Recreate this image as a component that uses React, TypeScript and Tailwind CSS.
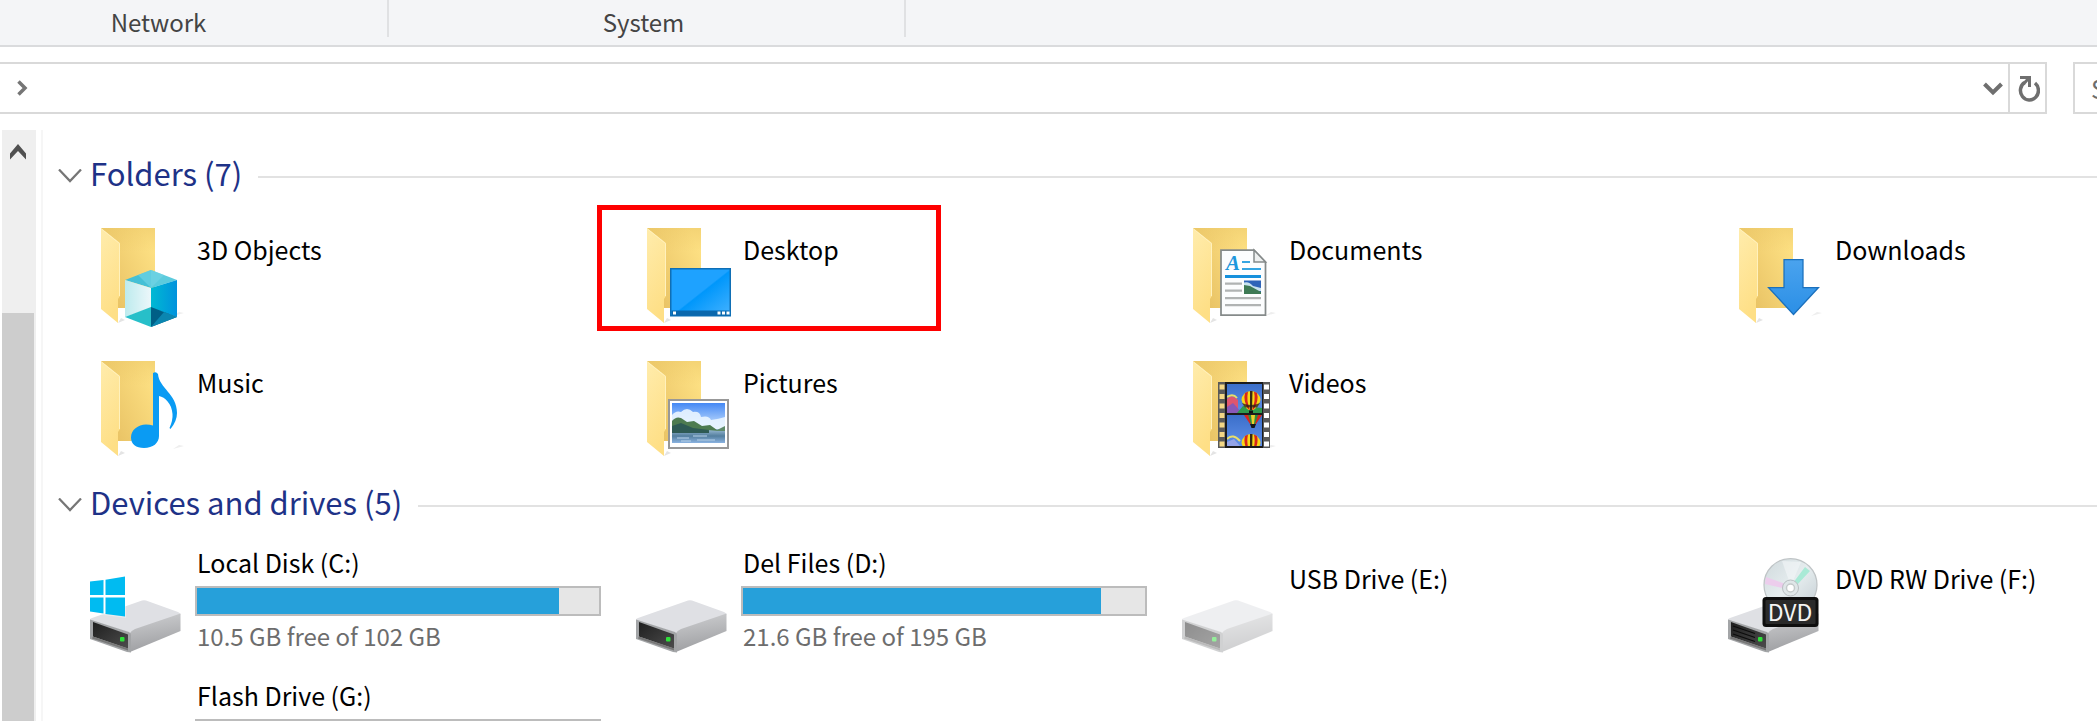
import type { ReactNode } from "react";

function Gradients() {
  return (
    <svg aria-hidden="true" className="absolute h-0 w-0">
      <defs>
        <linearGradient id="folder-back" x1="0" y1="1" x2="1" y2="0.3">
          <stop offset="0.2" stopColor="#e9c365" />
          <stop offset="1" stopColor="#fde083" />
        </linearGradient>
        <linearGradient id="folder-top" x1="0" y1="0" x2="0" y2="1">
          <stop offset="0" stopColor="#e6c05f" stopOpacity="0.4" />
          <stop offset="0.3" stopColor="#e6c05f" stopOpacity="0" />
        </linearGradient>
        <linearGradient id="folder-flap" x1="0" y1="0" x2="0.3" y2="1">
          <stop offset="0" stopColor="#ffecac" />
          <stop offset="1" stopColor="#fedf86" />
        </linearGradient>
        <linearGradient id="cube-right" x1="0" y1="0" x2="1" y2="0">
          <stop offset="0" stopColor="#00b9d3" />
          <stop offset="1" stopColor="#0092dd" />
        </linearGradient>
        <linearGradient id="cube-left" x1="0" y1="0" x2="1" y2="0">
          <stop offset="0" stopColor="#bdebee" />
          <stop offset="1" stopColor="#ecf7fa" />
        </linearGradient>
        <linearGradient id="screen" x1="0" y1="0" x2="1" y2="1">
          <stop offset="0" stopColor="#1ea2ff" />
          <stop offset="0.5" stopColor="#1ea2ff" />
          <stop offset="0.52" stopColor="#0097fb" />
          <stop offset="1" stopColor="#45b2ff" />
        </linearGradient>
        <linearGradient id="sky" x1="0" y1="0" x2="0" y2="1">
          <stop offset="0" stopColor="#4488f4" />
          <stop offset="1" stopColor="#d8ecff" />
        </linearGradient>
        <linearGradient id="lake" x1="0" y1="0" x2="0" y2="1">
          <stop offset="0" stopColor="#9dbdd6" />
          <stop offset="0.5" stopColor="#547f9f" />
          <stop offset="1" stopColor="#8ab2e0" />
        </linearGradient>
        <linearGradient id="film-sky" x1="0" y1="0" x2="0" y2="1">
          <stop offset="0" stopColor="#3b6fca" />
          <stop offset="1" stopColor="#5f8fe8" />
        </linearGradient>
        <linearGradient id="arrow" x1="0" y1="0" x2="0" y2="1">
          <stop offset="0" stopColor="#4aa3ee" />
          <stop offset="1" stopColor="#2b8fe6" />
        </linearGradient>
        <linearGradient id="drive-side" x1="0" y1="0" x2="0.2" y2="1">
          <stop offset="0" stopColor="#cfd0d2" />
          <stop offset="1" stopColor="#9fa0a3" />
        </linearGradient>
        <linearGradient id="drive-slot" x1="0" y1="0" x2="1" y2="1">
          <stop offset="0" stopColor="#1f1f1f" />
          <stop offset="1" stopColor="#4c4c4c" />
        </linearGradient>
        <linearGradient id="disc" x1="0" y1="0" x2="1" y2="1">
          <stop offset="0" stopColor="#cfd9dc" />
          <stop offset="0.5" stopColor="#e6edef" />
          <stop offset="1" stopColor="#c3cdd2" />
        </linearGradient>
      </defs>
    </svg>
  );
}

function Icon({ children }: { children: ReactNode }) {
  return (
    <svg aria-hidden="true" viewBox="0 0 144 126" className="h-[126px] w-36 shrink-0">
      {children}
    </svg>
  );
}

function Folder({ children }: { children: ReactNode }) {
  return (
    <Icon>
      <path d="M67 118 L74 115 L70 113Z" fill="#e4e4e4" />
      <path d="M122 111 L133 108 L128 107Z" fill="#eeeeee" />
      <path d="M50 23H104V103H67Z" fill="url(#folder-back)" />
      <path d="M50 23H104V103H67Z" fill="url(#folder-top)" />
      <path d="M50 23L69 38V91L67 94V118L50 104Z" fill="url(#folder-flap)" />
      <path d="M50.5 24L68.5 38.500V91" fill="none" stroke="#fff1bd" strokeWidth="1" />
      {children}
    </Icon>
  );
}

function Objects3D() {
  return (
    <Folder>
      <path d="M100 65L126 75L100 83Z" fill="#5ccbdd" />
      <path d="M100 65L74 75L100 83Z" fill="#45c0d6" />
      <path d="M100 65L113 70L100 83L87 70Z" fill="#74d6e6" opacity="0.6" />
      <path d="M74 75L100 83V103L74 112Z" fill="url(#cube-left)" />
      <path d="M126 75L100 83V103L126 112Z" fill="url(#cube-right)" />
      <path d="M74 112L100 102V122Z" fill="#27bfc9" />
      <path d="M126 112L100 102V122Z" fill="#005f86" />
      <path d="M126 112L113 107L100 122Z" fill="#0b86b0" />
    </Folder>
  );
}

function Music() {
  return (
    <Folder>
      <path
        d="M102 35Q105 33 107 36C108 50 126 56 126 75Q126 83 119.500 91L118.500 90Q122 82 121.500 76C121 66 114 59 108 58V98C108 105 102 110 93 110C85 110 80 106 80 99.500C80 92 87 86.500 95 86.500Q99 86.500 102 87.500Z"
        fill="#0a9bf3"
      />
    </Folder>
  );
}

function Desktop() {
  return (
    <Folder>
      <rect x="73.750" y="63.750" width="59.500" height="47" fill="url(#screen)" stroke="#0f6fb5" strokeWidth="1.500" />
      <rect x="74.500" y="105.500" width="58" height="5" fill="#0b68ad" />
      <path d="M76 106.500h3v3h-3zM120.500 106.500h3v3h-3zM125 106.500h3v3h-3zM129.500 106.500h3v3h-3z" fill="#fff" />
    </Folder>
  );
}

function Pictures() {
  return (
    <Folder>
      <rect x="72" y="62" width="59" height="48" fill="#fff" stroke="#989898" strokeWidth="2" />
      <rect x="75" y="65" width="53" height="27" fill="url(#sky)" />
      <path d="M75 77Q79 72 84 74Q90 68 96 74Q103 73 104 79Q112 77 114 82Q122 81 128 79V92H75Z" fill="#eaf5ff" opacity="0.9" />
      <rect x="75" y="91" width="53" height="14" fill="url(#lake)" />
      <path d="M75 83Q79 78 84 80L90 84L97 83L105 88L113 87L120 92H75Z" fill="#4d7b50" />
      <path d="M75 88L84 85L96 90L112 92V95H75Z" fill="#2e5a54" />
      <path d="M120 92L128 88V93H110Z" fill="#5f8a6a" />
      <path d="M80 100h12M96 98h14M100 102h18M84 103h10" stroke="#b9d3ea" strokeWidth="1" />
    </Folder>
  );
}

function Documents() {
  return (
    <Folder>
      <path d="M78 45H111L122.500 57V110H78Z" fill="#fcfdfe" stroke="#858a8a" strokeWidth="1.750" />
      <path d="M111 45V57H122.500Z" fill="#eef0f0" stroke="#858a8a" strokeWidth="1.500" />
      <text x="83" y="65" fontSize="21" fontWeight="700" fontStyle="italic" fill="#1d97dc" className="font-['Liberation_Serif',serif]">
        A
      </text>
      <path d="M99 57h8M99 64h19" stroke="#35a5e2" strokeWidth="2" />
      <path d="M82 71.500h36" stroke="#1590dc" strokeWidth="3" />
      <path d="M82 78.500h17M82 85.500h17M82 93h36M82 100h36" stroke="#b0b3b3" strokeWidth="2.250" />
      <rect x="101" y="75.500" width="17" height="13.500" fill="#2f64b8" />
      <path d="M101 77.500Q106 76 110 81L118 83V86H101Z" fill="#c7e2ee" />
      <path d="M101 80L107 81L118 87V89H101Z" fill="#3e7a55" />
    </Folder>
  );
}

function Balloon({ x, y }: { x: number; y: number }) {
  return (
    <g transform={`translate(${x} ${y})`}>
      <path d="M-9.500 0A9.500 9 0 0 1 9.500 0Q8 6 2.500 10H-2.500Q-8 6 -9.500 0Z" fill="#f7d716" />
      <path d="M-6 -7Q-8 0 -3 9L-1 10Q-5 1 -3 -8.500Z" fill="#d8261c" />
      <path d="M6 -7Q8 0 3 9L1 10Q5 1 3 -8.500Z" fill="#d8261c" />
      <path d="M-1 -9H1.500L1 10H-1Z" fill="#3a2a12" />
      <path d="M-9 3Q0 7 9 3L6 7.500H-6Z" fill="#241a18" opacity="0.75" />
      <path d="M-2 10.500h4v3h-4z" fill="#111" />
    </g>
  );
}

const sprocketRows = [46.5, 56, 65.5, 75, 84.5, 94, 103.5];

function Videos() {
  return (
    <Folder>
      <clipPath id="frame-one"><rect x="84" y="46" width="35" height="29" /></clipPath>
      <clipPath id="frame-two"><rect x="84" y="77" width="35" height="31" /></clipPath>
      <rect x="75" y="44" width="52" height="66" fill="#1c1c1c" />
      <rect x="75" y="44" width="7" height="66" fill="#595959" />
      <rect x="120" y="44" width="7" height="66" fill="#595959" />
      {sprocketRows.map((y) => (
        <g key={y}>
          <rect x="76.500" y={y} width="5" height="5" fill="#f3d785" />
          <rect x="121" y={y} width="5" height="5" fill="#fff" />
        </g>
      ))}
      <g clipPath="url(#frame-one)">
        <rect x="84" y="46" width="35" height="29" fill="url(#film-sky)" />
        <path d="M84 61Q88 55 95 62V75H84Z" fill="#e0566f" />
        <path d="M84 69L90 65L99 75H84Z" fill="#8958b8" />
        <path d="M84 59Q90 55 94 60" stroke="#e8df6a" strokeWidth="2" fill="none" />
        <path d="M94 75L100 68L119 70V75Z" fill="#2f9a4c" />
        <Balloon x={108} y={62} />
      </g>
      <g clipPath="url(#frame-two)">
        <rect x="84" y="77" width="35" height="31" fill="url(#film-sky)" />
        <path d="M101 77H119L113 86H107Z" fill="#d8261c" />
        <path d="M105 77H108L110 86H108ZM115 77H112L110 86H112Z" fill="#2a8e3f" />
        <path d="M108 77H112L111 86H109Z" fill="#e9d22c" />
        <path d="M107 86h6l-1.500 4h-3z" fill="#161616" />
        <path d="M84 101Q90 95 97 103" stroke="#e8df6a" strokeWidth="2" fill="none" />
        <path d="M84 104L91 101L97 108H84Z" fill="#94a4e8" />
        <Balloon x={108} y={105} />
      </g>
    </Folder>
  );
}

function Downloads() {
  return (
    <Folder>
      <path d="M95 54.500H114V82.500H129.500L104.500 109.500L79.500 82.500H95Z" fill="url(#arrow)" stroke="#1b70bd" strokeWidth="1.250" />
    </Folder>
  );
}

function DriveBody({ faded = false }: { faded?: boolean }) {
  return (
    <g opacity={faded ? 0.5 : 1}>
      <path d="M39 86Q39 84.500 41 84L91 66.500Q93 66 95 66.500L127 78Q129.500 79 129.500 81L80 99Z" fill="#dfe0e4" />
      <path d="M79 99Q80 97 84 95L129.500 79.500V97L79 118Z" fill="url(#drive-side)" />
      <path d="M39 85.500L78 98Q80 99 80 101V118.500L76 118L39 105Z" fill="#a3a5a7" />
      <path d="M42 88L77 100.500V114.500L42 102.500Z" fill="url(#drive-slot)" />
      <path d="M42 102.500L77 114.500V116.500L41 104.500Z" fill="#787878" />
      <rect x="69" y="103" width="4.500" height="4.500" rx="1" fill="#2ee03a" />
    </g>
  );
}

function LocalDisk() {
  return (
    <Icon>
      <DriveBody />
      <path d="M38 46.500L75 41V84L38 79Z" fill="#fff" opacity="0.35" />
      <path d="M39 47.500L52.500 46V61H39ZM54.500 45.700L74 42.500V61H54.500ZM39 63.500H52.500V79.500L39 77.500ZM54.500 63.500H74V82.500L54.500 80Z" fill="#00bbf1" />
    </Icon>
  );
}

function HardDrive() {
  return <Icon><DriveBody /></Icon>;
}

function UsbDrive() {
  return <Icon><DriveBody faded /></Icon>;
}

function DvdDrive() {
  return (
    <Icon>
      <DriveBody />
      <path d="M44 92L66 99.500M44 96L66 103.500M44 100L66 107.500" stroke="#0c0c0c" strokeWidth="1.250" />
      <path d="M80 66L132 62V78L80 78Z" fill="#fff" />
      <circle cx="101.500" cy="51" r="26.500" fill="url(#disc)" stroke="#bfc4c6" strokeWidth="1.250" />
      <path d="M99 51L77 43L76 50L98 55Z" fill="#eccdec" />
      <path d="M104 49L116 33L121 37L107 52Z" fill="#a9ead6" />
      <path d="M93 27L100 47L104 47L112 28Z" fill="#f3f7f8" opacity="0.6" />
      <circle cx="101.500" cy="54" r="8" fill="#dfe6e8" stroke="#b9bfc2" strokeWidth="1" />
      <circle cx="101.500" cy="54" r="4" fill="#fff" stroke="#c4caca" strokeWidth="1.500" />
      <rect x="73.500" y="63" width="56" height="30" rx="3.500" fill="#0e0e0e" />
      <rect x="76.500" y="66" width="50" height="24" rx="1" fill="#2a2a2a" />
      <text x="101" y="87" textAnchor="middle" fontSize="23" fill="#f4f4f4">DVD</text>
    </Icon>
  );
}

interface FolderEntry {
  name: string;
  icon: ReactNode;
  marked?: boolean;
}

const folders: FolderEntry[] = [
  { name: "3D Objects", icon: <Objects3D /> },
  { name: "Desktop", icon: <Desktop />, marked: true },
  { name: "Documents", icon: <Documents /> },
  { name: "Downloads", icon: <Downloads /> },
  { name: "Music", icon: <Music /> },
  { name: "Pictures", icon: <Pictures /> },
  { name: "Videos", icon: <Videos /> },
];

interface DriveEntry {
  name: string;
  icon: ReactNode;
  used?: number;
  detail?: string;
}

const drives: DriveEntry[] = [
  { name: "Local Disk (C:)", icon: <LocalDisk />, used: 90, detail: "10.5 GB free of 102 GB" },
  { name: "Del Files (D:)", icon: <HardDrive />, used: 89, detail: "21.6 GB free of 195 GB" },
  { name: "USB Drive (E:)", icon: <UsbDrive /> },
  { name: "DVD RW Drive (F:)", icon: <DvdDrive /> },
  { name: "Flash Drive (G:)", icon: <Icon>{null}</Icon>, used: 0, detail: "" },
];

function GroupHeader({ title }: { title: string }) {
  return (
    <h2 className="flex h-10 items-center pl-[15px]">
      <button type="button" className="flex h-10 items-center gap-2 text-[31px] leading-8 text-[#1e3287]">
        <svg aria-hidden="true" viewBox="0 0 24 16" className="h-4 w-6" fill="none" stroke="#767676" strokeWidth="2.250">
          <path d="M1 0.500L12 12L23 0.500" />
        </svg>
        <span className="whitespace-nowrap pb-2">{title}</span>
      </button>
      <span className="ml-4 h-0.5 flex-1 bg-[#e2e2e2]" />
    </h2>
  );
}

export default function App() {
  return (
    <div className="flex h-screen flex-col overflow-hidden bg-white font-['Noto_Sans_CJK_SC','Noto_Sans',sans-serif] text-[25px] leading-8 text-black">
      <Gradients />
      <header className="flex h-[47px] shrink-0 border-b-2 border-[#dadbdd] bg-[#f4f5f7] text-2xl leading-8 text-[#444444]">
        <div className="h-[37px] w-[389px] border-r-2 border-[#e0e1e3] pr-[70px] pt-1.5 text-center">Network</div>
        <div className="h-[37px] w-[517px] border-r-2 border-[#e0e1e3] pr-1.5 pt-1.5 text-center">System</div>
      </header>

      <nav className="mt-[15px] flex h-[52px] shrink-0 gap-[26px]">
        <div className="flex flex-1 border-2 border-l-0 border-[#d9d9d9]">
          <button type="button" aria-label="This PC" className="pl-4">
            <svg aria-hidden="true" viewBox="0 0 14 18" className="h-[18px] w-3.5" fill="none" stroke="#757575" strokeWidth="3.500">
              <path d="M2.500 2.500L9 9L2.500 15.500" />
            </svg>
          </button>
          <button type="button" aria-label="Previous locations" className="ml-auto pr-1">
            <svg aria-hidden="true" viewBox="0 0 22 16" className="h-4 w-[22px]" fill="none" stroke="#6f6f6f" strokeWidth="4">
              <path d="M2.500 4L11 12.500L19.500 4" />
            </svg>
          </button>
          <button type="button" aria-label="Refresh" className="flex w-[37px] items-center justify-center border-l-2 border-[#d9d9d9]">
            <svg aria-hidden="true" viewBox="0 0 24 28" className="h-7 w-6" fill="none" stroke="#6f6f6f">
              <path d="M8.500 8.500A9 9.500 0 1 0 19 9" strokeWidth="3.500" />
              <path d="M4 3.500H13.500V13" strokeWidth="3" />
              <path d="M12.500 4.500L7.500 10" strokeWidth="3" />
            </svg>
          </button>
        </div>
        <div className="w-6 shrink-0 overflow-hidden border-2 border-r-0 border-[#d9d9d9]">
          <input type="search" aria-label="Search" placeholder="Search" className="h-12 w-60 pl-4 placeholder:text-[#6d6d6d]" />
        </div>
      </nav>

      <div className="mt-4 flex min-h-0 flex-1">
        <div className="ml-0.5 flex w-[34px] shrink-0 flex-col bg-[#efefef]">
          <button type="button" aria-label="Scroll up" className="flex h-[183px] w-8 shrink-0 justify-center pt-3.5">
            <svg aria-hidden="true" viewBox="0 0 18 16" className="h-4 w-[18px]">
              <path d="M9 0L17 9.500V15.500L9 7L1 15.500V9.500Z" fill="#505050" />
            </svg>
          </button>
          <div className="w-8 flex-1 bg-[#cdcdcd]" />
        </div>
        <main className="ml-[5px] min-w-0 flex-1 border-l-2 border-[#f6f6f6]">
          <section className="pt-[27px]">
            <GroupHeader title="Folders (7)" />
            <ul className="mt-2 grid grid-cols-[repeat(4,546px)] gap-y-[7px] pl-2">
              {folders.map((folder) => (
                <li key={folder.name} className="relative flex h-[126px] w-[344px]">
                  {folder.icon}
                  <span className="whitespace-nowrap pl-0.5 pt-7">{folder.name}</span>
                  {folder.marked && <span className="absolute inset-0 border-[5px] border-[#fe0000]" />}
                </li>
              ))}
            </ul>
          </section>
          <section className="pt-[22px]">
            <GroupHeader title="Devices and drives (5)" />
            <ul className="mt-2 grid grid-cols-[repeat(4,546px)] gap-y-[7px] pl-2">
              {drives.map((drive) => (
                <li key={drive.name} className="flex h-[126px]">
                  {drive.icon}
                  {drive.used === undefined ? (
                    <span className="whitespace-nowrap pl-0.5 pt-7">{drive.name}</span>
                  ) : (
                    <div className="w-[406px] shrink-0 pt-3">
                      <div className="pl-0.5">{drive.name}</div>
                      <div className="mt-2 h-[30px] border-2 border-[#bcbcbc] bg-[#e6e6e6]">
                        <div className="h-full bg-[#26a0da]" style={{ width: `${drive.used}%` }} />
                      </div>
                      <div className="mt-1 pl-0.5 text-2xl leading-8 text-[#6d6d6d]">{drive.detail}</div>
                    </div>
                  )}
                </li>
              ))}
            </ul>
          </section>
        </main>
      </div>
    </div>
  );
}
